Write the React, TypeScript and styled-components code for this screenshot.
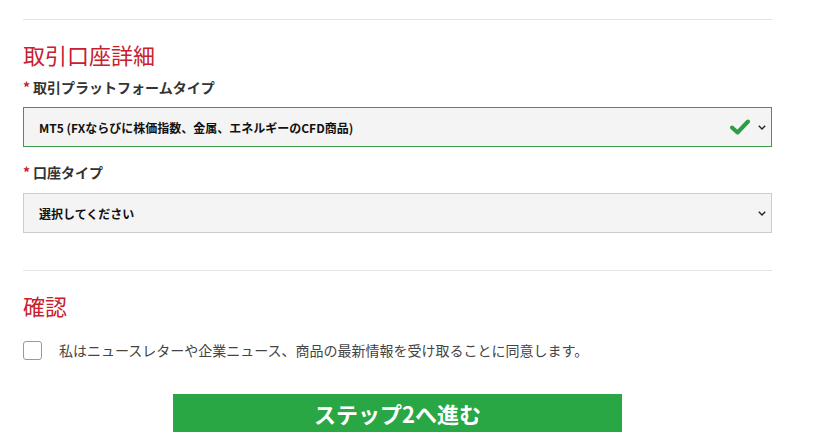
import styled, { createGlobalStyle } from 'styled-components';

const GlobalStyle = createGlobalStyle`
  body {
    margin: 0;
    background: #fff;
    font-family: "Noto Sans CJK JP", "Liberation Sans", sans-serif;
    color: #222;
  }
`;

export default function App() {
  return (
    <>
      <GlobalStyle />
      <Page>
        <Divider />
        <Heading>取引口座詳細</Heading>
        <Label><Star>*</Star>取引プラットフォームタイプ</Label>
        <SelectWrap>
          <Select valid defaultValue='mt5'>
            <option value='mt5'>MT5 (FXならびに株価指数、金属、エネルギーのCFD商品)</option>
          </Select>
          <Check width='20' height='16' viewBox='0 0 20 16'>
            <path d='M2 8.5 L7.5 13.5 L18 2.5' fill='none' stroke='#2e9e46' strokeWidth='4' strokeLinejoin='round' strokeLinecap='round' />
          </Check>
          <Chevron width='8' height='5' viewBox='0 0 8 5'>
            <path d='M0.8 0.8 L4 4 L7.2 0.8' fill='none' stroke='#222' strokeWidth='1.4' />
          </Chevron>
        </SelectWrap>
        <Label top={15}><Star>*</Star>口座タイプ</Label>
        <SelectWrap top={11}>
          <Select defaultValue=''>
            <option value=''>選択してください</option>
          </Select>
          <Chevron width='8' height='5' viewBox='0 0 8 5'>
            <path d='M0.8 0.8 L4 4 L7.2 0.8' fill='none' stroke='#222' strokeWidth='1.4' />
          </Chevron>
        </SelectWrap>
        <Divider top={37} />
        <Heading>確認</Heading>
        <CheckRow>
          <Box type='checkbox' />
          <span>私はニュースレターや企業ニュース、商品の最新情報を受け取ることに同意します。</span>
        </CheckRow>
        <Submit>ステップ2へ進む</Submit>
      </Page>
    </>
  );
}

const Page = styled.div`
  width: 749px;
  padding: 19px 23px 0;
  display: flex;
  flex-direction: column;
`;

const Divider = styled.div<{ top?: number }>`
  height: 1px;
  background: #e3e3e3;
  margin-top: ${p => p.top ?? 0}px;
`;

const Heading = styled.h2`
  margin: 19px 0 0;
  font-size: 22px;
  line-height: 30px;
  font-weight: 400;
  color: #c8202f;
`;

const Label = styled.div<{ top?: number }>`
  margin-top: ${p => p.top ?? 8}px;
  font-size: 14px;
  line-height: 20px;
  font-weight: 700;
  color: #333;
`;

const Star = styled.span`
  color: #c8202f;
  margin-right: 3px;
`;

const SelectWrap = styled.div<{ top?: number }>`
  position: relative;
  margin-top: ${p => p.top ?? 10}px;
`;

const Select = styled.select<{ valid?: boolean }>`
  appearance: none;
  display: block;
  width: 100%;
  height: 40px;
  box-sizing: border-box;
  padding: 0 60px 0 15px;
  border: 1px solid ${p => (p.valid ? '#3c9a4c' : '#cccccc')};
  border-radius: 0;
  background: #f4f4f4;
  font-family: "Noto Sans CJK JP", "Liberation Sans", sans-serif;
  font-size: 12px;
  font-weight: 700;
  color: #111;
  outline: none;
`;

const Check = styled.svg`
  position: absolute;
  right: 22px;
  top: 12px;
  pointer-events: none;
`;

const Chevron = styled.svg`
  position: absolute;
  right: 6px;
  top: 18px;
  pointer-events: none;
`;

const CheckRow = styled.label`
  margin-top: 20px;
  display: flex;
  align-items: center;
  gap: 17px;
  font-size: 14px;
  line-height: 20px;
  color: #444;
`;

const Box = styled.input`
  appearance: none;
  margin: 0;
  width: 19px;
  height: 19px;
  border: 1px solid #9a9a9a;
  border-radius: 3px;
  background: #fff;
`;

const Submit = styled.button`
  margin: 34px 0 0 150px;
  width: 449px;
  height: 38px;
  border: none;
  background: #29a744;
  color: #fff;
  font-family: "Noto Sans CJK JP", "Liberation Sans", sans-serif;
  font-size: 22px;
  font-weight: 700;
  line-height: 38px;
  padding: 0;
`;
